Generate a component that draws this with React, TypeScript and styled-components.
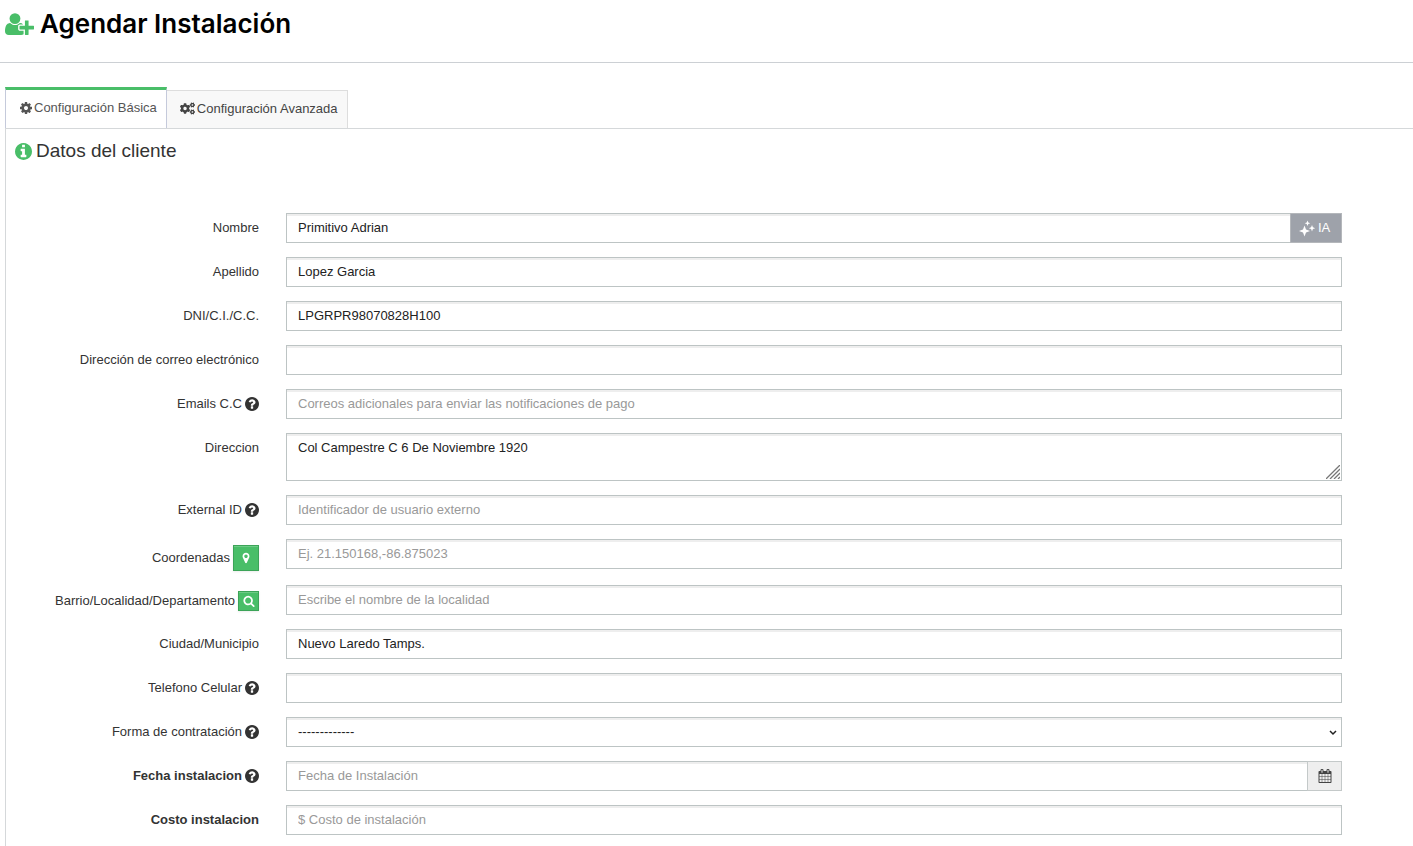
import React from "react";
import styled, { createGlobalStyle, css } from "styled-components";
import { FaCogs } from "react-icons/fa";

const GREEN = "#49be68";
const BORDER = "#bdc4c4";

const GlobalStyle = createGlobalStyle`
  * { box-sizing: border-box; }
  body {
    margin: 0;
    background: #fff;
    color: #333;
    font-family: "Liberation Sans", Arial, sans-serif;
    font-size: 13px;
    line-height: 18px;
  }
`;

const Page = styled.div`
  min-height: 100vh;
  display: flex;
  flex-direction: column;
  overflow-x: hidden;
`;

const Header = styled.header`
  display: flex;
  align-items: center;
  gap: 6px;
  padding: 8px 5px 22px;
  border-bottom: 1px solid #ccd0d4;
  color: ${GREEN};
`;

const Title = styled.h1`
  margin: 0;
  color: #000;
  font-family: Inter, "Open Sans", sans-serif;
  font-size: 26px;
  font-weight: 600;
  line-height: 32px;
`;

const Main = styled.main`
  flex: 1;
  display: flex;
  flex-direction: column;
  padding: 24px 0 0 5px;
`;

const Tabs = styled.div`
  display: flex;
  align-items: flex-end;
`;

const Tab = styled.button<{ $active?: boolean }>`
  display: flex;
  align-items: center;
  gap: 2px;
  height: 38px;
  padding: 0 9px 2px 13px;
  border: 1px solid #dddddd;
  border-width: 1px 1px 0 0;
  background: #f8f8f8;
  color: #444;
  font: inherit;
  cursor: pointer;
  ${(p) =>
    p.$active &&
    css`
      height: 41px;
      padding: 0 9px 2px 14px;
      border: 1px solid #c5cadb;
      border-width: 3px 1px 0;
      border-top-color: ${GREEN};
      background: #fff;
      color: #555;
    `}
`;

const Panel = styled.section`
  flex: 1;
  padding: 10px 71px 11px 9px;
  border: solid #d5d8da;
  border-width: 1px 0 0 1px;
`;

const PanelTitle = styled.h2`
  display: flex;
  align-items: center;
  gap: 4px;
  margin: 0 0 50px;
  font-size: 19px;
  font-weight: 400;
  line-height: 24px;
  svg { color: ${GREEN}; }
`;

const Form = styled.form`
  display: flex;
  flex-direction: column;
  gap: 14px;
`;

const Row = styled.div`
  display: grid;
  grid-template-columns: 244px minmax(0, 1fr);
  column-gap: 27px;
  align-items: start;
`;

const LabelCell = styled.div`
  display: flex;
  justify-content: flex-end;
  align-items: center;
  gap: 3px;
  padding-top: 6px;
  color: #333;
`;

const Label = styled.label<{ $bold?: boolean }>`
  font-weight: ${(p) => (p.$bold ? 700 : 400)};
`;

const control = css`
  display: block;
  width: 100%;
  min-width: 0;
  height: 30px;
  margin: 0;
  padding: 4px 11px 6px;
  border: 1px solid ${BORDER};
  border-radius: 0;
  outline: 0;
  background: #fff;
  box-shadow: inset 0 2px 0 #eeeeee;
  color: #222;
  font: inherit;
  &::placeholder { color: #999; opacity: 1; }
`;

const Input = styled.input`${control}`;

const Select = styled.select`
  ${control}
  appearance: none;
  padding: 5px 11px;
`;

const TextArea = styled.textarea`
  ${control}
  height: 48px;
  padding: 5px 11px;
  resize: none;
`;

const Group = styled.div`
  display: flex;
`;

const Overlay = styled.div`
  position: relative;
`;

const Corner = styled.svg<{ $bottom: number; $right: number }>`
  position: absolute;
  right: ${(p) => p.$right}px;
  bottom: ${(p) => p.$bottom}px;
  pointer-events: none;
`;

const AiButton = styled.button`
  flex: 0 0 auto;
  display: flex;
  align-items: center;
  gap: 2px;
  width: 52px;
  height: 30px;
  margin-left: -1px;
  padding: 0 8px;
  border: 1px solid #b4b7bb;
  background: #9ea2aa;
  color: #fff;
  font: inherit;
`;

const CalendarButton = styled.button`
  flex: 0 0 auto;
  display: flex;
  align-items: center;
  justify-content: center;
  width: 35px;
  height: 30px;
  margin-left: -1px;
  padding: 0;
  border: 1px solid #c4c9c9;
  background: #eee;
  color: #444;
`;

const GreenButton = styled.button<{ $large?: boolean }>`
  display: flex;
  align-items: center;
  justify-content: center;
  width: ${(p) => (p.$large ? 26 : 21)}px;
  height: ${(p) => (p.$large ? 26 : 20)}px;
  padding: 0;
  border: 1px solid #3ca458;
  background: ${GREEN};
  color: #fff;
  box-shadow: inset 0 1px 0 rgba(255, 255, 255, 0.2), 0 1px 2px rgba(0, 0, 0, 0.08);
`;

const paths = {
  cog: "M1152 896q0-106-75-181t-181-75-181 75-75 181 75 181 181 75 181-75 75-181zm512-109v222q0 12-8 23t-20 13l-185 28q-19 54-39 91 35 50 107 138 10 12 10 25t-9 23q-27 37-99 108t-94 71q-12 0-26-9l-138-108q-44 23-91 38-16 136-29 186-7 28-36 28h-222q-14 0-24.5-8.5t-11.5-21.5l-28-184q-49-16-90-37l-141 107q-10 9-25 9-14 0-25-11-126-114-165-168-7-10-7-23 0-12 8-23 15-21 51-66.5t54-70.5q-27-50-41-99l-183-27q-13-2-21-12.5t-8-23.5v-222q0-12 8-23t19-13l186-28q14-46 39-92-40-57-107-138-10-12-10-24 0-10 9-23 26-36 98.5-107.5t94.5-71.5q13 0 26 10l138 107q44-23 91-38 16-136 29-186 7-28 36-28h222q14 0 24.5 8.5t11.5 21.5l28 184q49 16 90 37l142-107q9-9 24-9 13 0 25 10 129 119 165 170 7 8 7 22 0 12-8 23-15 21-51 66.5t-54 70.5q26 50 41 98l183 28q13 2 21 12.5t8 23.5z",
  info: "M1152 1376v-160q0-14-9-23t-23-9h-96v-512q0-14-9-23t-23-9h-320q-14 0-23 9t-9 23v160q0 14 9 23t23 9h96v320h-96q-14 0-23 9t-9 23v160q0 14 9 23t23 9h448q14 0 23-9t9-23zm-128-896v-160q0-14-9-23t-23-9h-192q-14 0-23 9t-9 23v160q0 14 9 23t23 9h192q14 0 23-9t9-23zm640 416q0 209-103 385.5t-279.5 279.5-385.5 103-385.5-103-279.5-279.5-103-385.5 103-385.5 279.5-279.5 385.5-103 385.5 103 279.5 279.5 103 385.5z",
  question: "M1024 1376v-192q0-14-9-23t-23-9h-192q-14 0-23 9t-9 23v192q0 14 9 23t23 9h192q14 0 23-9t9-23zm256-672q0-88-55.5-163t-138.5-116-170-41q-243 0-371 213-15 24 8 42l132 100q7 6 19 6 16 0 25-12 53-68 86-92 34-24 86-24 48 0 85.5 26t37.5 59q0 38-20 61t-68 45q-63 28-115.5 86.5t-52.5 125.5v36q0 14 9 23t23 9h192q14 0 23-9t9-23q0-19 21.5-49.5t54.5-49.5q32-18 49-28.5t46-35 44.5-48 28-60.5 12.5-81zm384 192q0 209-103 385.5t-279.5 279.5-385.5 103-385.5-103-279.5-279.5-103-385.5 103-385.5 279.5-279.5 385.5-103 385.5 103 279.5 279.5 103 385.5z",
  search: "M1216 832q0-185-131.5-316.5t-316.5-131.5-316.5 131.5-131.5 316.5 131.5 316.5 316.5 131.5 316.5-131.5 131.5-316.5zm512 832q0 52-38 90t-90 38q-54 0-90-38l-343-342q-179 124-399 124-143 0-273.5-55.5t-225-150-150-225-55.5-273.5 55.5-273.5 150-225 225-150 273.5-55.5 273.5 55.5 225 150 150 225 55.5 273.5q0 220-124 399l343 343q37 37 37 90z",
  marker: "M1152 640q0-106-75-181t-181-75-181 75-75 181 75 181 181 75 181-75 75-181zm256 0q0 109-33 179l-364 774q-16 33-47.5 52t-67.5 19-67.5-19-46.5-52l-365-774q-33-70-33-179 0-212 150-362t362-150 362 150 150 362z",
  calendar: "M192 1664h288v-288h-288v288zm352 0h320v-288h-320v288zm-352-352h288v-320h-288v320zm352 0h320v-320h-320v320zm-352-384h288v-288h-288v288zm736 736h320v-288h-320v288zm-384-736h320v-288h-320v288zm768 736h288v-288h-288v288zm-384-352h320v-320h-320v320zm-352-864v-288q0-13-9.5-22.5t-22.5-9.5h-64q-13 0-22.5 9.5t-9.5 22.5v288q0 13 9.5 22.5t22.5 9.5h64q13 0 22.5-9.5t9.5-22.5zm736 864h288v-320h-288v320zm-384-384h320v-288h-320v288zm384 0h288v-288h-288v288zm32-480v-288q0-13-9.5-22.5t-22.5-9.5h-64q-13 0-22.5 9.5t-9.5 22.5v288q0 13 9.5 22.5t22.5 9.5h64q13 0 22.5-9.5t9.5-22.5zm384-64v1280q0 52-38 90t-90 38h-1408q-52 0-90-38t-38-90v-1280q0-52 38-90t90-38h128v-96q0-66 47-113t113-47h64q66 0 113 47t47 113v96h384v-96q0-66 47-113t113-47h64q66 0 113 47t47 113v96h128q52 0 90 38t38 90z",
  userPlus: "M704 896q-159 0-271.5-112.5t-112.5-271.5 112.5-271.5 271.5-112.5 271.5 112.5 112.5 271.5-112.5 271.5-271.5 112.5zm960 128h352q13 0 22.5 9.5t9.5 22.5v192q0 13-9.5 22.5t-22.5 9.5h-352v352q0 13-9.5 22.5t-22.5 9.5h-192q-13 0-22.5-9.5t-9.5-22.5v-352h-352q-13 0-22.5-9.5t-9.5-22.5v-192q0-13 9.5-22.5t22.5-9.5h352v-352q0-13 9.5-22.5t22.5-9.5h192q13 0 22.5 9.5t9.5 22.5v352zm-736 224q0 52 38 90t90 38h256v238q-68 50-171 50h-874q-121 0-194-69t-73-190q0-53 3.5-103.5t14-109 26.5-108.5 43-97.5 62-81 85.5-53.5 111.5-20q19 0 39 17 79 61 154.5 91.5t164.5 30.5 164.5-30.5 154.5-91.5q20-17 39-17 132 0 217 96h-223q-52 0-90 38t-38 90v192z",
};

const boxes: Partial<Record<keyof typeof paths, string>> = {
  cog: "128 128 1536 1536",
  info: "128 128 1536 1536",
  question: "128 128 1536 1536",
  userPlus: "0 0 2048 1792",
};

function Icon({ name, width, height = width }: { name: keyof typeof paths; width: number; height?: number }) {
  return (
    <svg width={width} height={height} viewBox={boxes[name] ?? "0 0 1792 1792"} fill="currentColor" aria-hidden="true">
      <path d={paths[name]} />
    </svg>
  );
}

function Sparkles() {
  return (
    <svg width="17" height="17" viewBox="0 0 17 17" fill="currentColor" aria-hidden="true">
      <path d="M5.5 5.500L7 9.500L11 11L7 12.500L5.500 16.500L4 12.500L0 11L4 9.500Z" />
      <path d="M8.500 0.500L9.300 2.500L11.300 3.300L9.300 4.100L8.500 6.100L7.700 4.100L5.700 3.300L7.700 2.500Z" />
      <path d="M13 5L13.900 7.300L16.200 8.200L13.900 9.100L13 11.400L12.100 9.100L9.800 8.200L12.100 7.300Z" />
    </svg>
  );
}

interface FieldProps {
  id: string;
  label: string;
  help?: boolean;
  bold?: boolean;
  action?: React.ReactNode;
  value?: string;
  placeholder?: string;
  type?: string;
  addon?: React.ReactNode;
  children?: React.ReactNode;
}

function Field({ id, label, help, bold, action, value, placeholder, type = "text", addon, children }: FieldProps) {
  return (
    <Row>
      <LabelCell>
        <Label htmlFor={id} $bold={bold}>{label}</Label>
        {help && <Icon name="question" width={14} />}
        {action}
      </LabelCell>
      {children ?? (
        <Group>
          <Input id={id} type={type} defaultValue={value} placeholder={placeholder} />
          {addon}
        </Group>
      )}
    </Row>
  );
}

export default function App() {
  return (
    <Page>
      <GlobalStyle />
      <Header>
        <Icon name="userPlus" width={29} height={26} />
        <Title>Agendar Instalación</Title>
      </Header>
      <Main>
        <Tabs role="tablist">
          <Tab type="button" role="tab" aria-selected="true" $active>
            <Icon name="cog" width={12} />
            Configuración Básica
          </Tab>
          <Tab type="button" role="tab" aria-selected="false">
            <FaCogs size={15} aria-hidden="true" />
            Configuración Avanzada
          </Tab>
        </Tabs>
        <Panel>
          <PanelTitle>
            <Icon name="info" width={17} />
            Datos del cliente
          </PanelTitle>
          <Form>
            <Field
              id="nombre"
              label="Nombre"
              value="Primitivo Adrian"
              addon={<AiButton type="button"><Sparkles />IA</AiButton>}
            />
            <Field id="apellido" label="Apellido" value="Lopez Garcia" />
            <Field id="dni" label="DNI/C.I./C.C." value="LPGRPR98070828H100" />
            <Field id="correo" label="Dirección de correo electrónico" type="email" />
            <Field id="emails" label="Emails C.C" help placeholder="Correos adicionales para enviar las notificaciones de pago" />
            <Field id="direccion" label="Direccion">
              <Overlay>
                <TextArea id="direccion" defaultValue="Col Campestre C 6 De Noviembre 1920" />
                <Corner $right={2} $bottom={2} width="14" height="14" viewBox="0 0 14 14" stroke="#777" strokeWidth="1.3" aria-hidden="true">
                  <path d="M0 14L14 0M4 14L14 4M8 14L14 8M12 14L14 12" />
                </Corner>
              </Overlay>
            </Field>
            <Field id="external" label="External ID" help placeholder="Identificador de usuario externo" />
            <Field
              id="coordenadas"
              label="Coordenadas"
              placeholder="Ej. 21.150168,-86.875023"
              action={<GreenButton type="button" $large aria-label="Mapa"><Icon name="marker" width={12} /></GreenButton>}
            />
            <Field
              id="barrio"
              label="Barrio/Localidad/Departamento"
              placeholder="Escribe el nombre de la localidad"
              action={<GreenButton type="button" aria-label="Buscar"><Icon name="search" width={12} /></GreenButton>}
            />
            <Field id="ciudad" label="Ciudad/Municipio" value="Nuevo Laredo Tamps." />
            <Field id="telefono" label="Telefono Celular" help type="tel" />
            <Field id="forma" label="Forma de contratación" help>
              <Overlay>
                <Select id="forma">
                  <option>-------------</option>
                </Select>
                <Corner $right={5} $bottom={11} width="8" height="6" viewBox="0 0 8 6" fill="none" stroke="#222" strokeWidth="1.5" aria-hidden="true">
                  <path d="M1 1L4 4L7 1" />
                </Corner>
              </Overlay>
            </Field>
            <Field
              id="fecha"
              label="Fecha instalacion"
              help
              bold
              placeholder="Fecha de Instalación"
              addon={<CalendarButton type="button" aria-label="Calendario"><Icon name="calendar" width={14} /></CalendarButton>}
            />
            <Field id="costo" label="Costo instalacion" bold placeholder="$ Costo de instalación" />
          </Form>
        </Panel>
      </Main>
    </Page>
  );
}
